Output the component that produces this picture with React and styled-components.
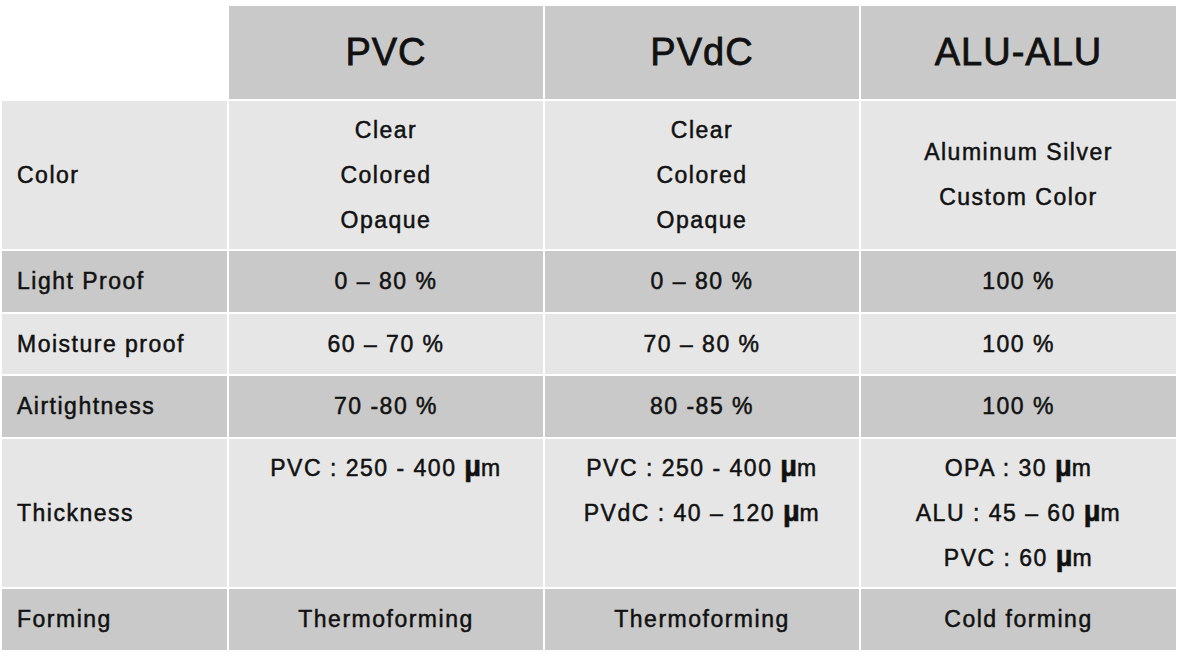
import React from "react";
import styled, { createGlobalStyle } from "styled-components";

const GlobalStyle = createGlobalStyle`
  * { box-sizing: border-box; }
  body {
    margin: 0;
    background: #fff;
    font-family: "Liberation Sans", Arial, sans-serif;
    color: #111;
  }
`;

const Table = styled.table`
  margin-top: 4px;
  width: 1178px;
  table-layout: fixed;
  border-collapse: separate;
  border-spacing: 2px;
`;

const HeadCell = styled.th`
  height: 93px;
  padding: 0;
  background: ${(p) => (p.$blank ? "transparent" : "#c9c9c9")};
  font-size: 38px;
  font-weight: 400;
  letter-spacing: 1px;
  -webkit-text-stroke: 0.8px #111;
  text-align: center;
  vertical-align: middle;
`;

const Cell = styled.td`
  height: ${(p) => p.$h}px;
  padding: ${(p) => (p.$top ? "7px 0 0" : "0")};
  background: ${(p) => (p.$dark ? "#c9c9c9" : "#e6e6e6")};
  font-size: 23px;
  line-height: 45px;
  letter-spacing: 1.5px;
  -webkit-text-stroke: 0.5px #111;
  text-align: center;
  vertical-align: ${(p) => (p.$top ? "top" : "middle")};
`;

const Label = styled(Cell)`
  text-align: left;
  padding-left: 15px;
`;

const Line = styled.div`
  height: 45px;
`;

const Micro = styled.span`
  font-weight: 700;
  font-size: 29px;
  line-height: 1;
  letter-spacing: 0;
`;

const um = (
  <>
    <Micro>µ</Micro>m
  </>
);

const rows = [
  { label: "Color", h: 148, cells: [["Clear", "Colored", "Opaque"], ["Clear", "Colored", "Opaque"], ["Aluminum Silver", "Custom Color"]] },
  { label: "Light Proof", h: 61, dark: true, cells: [["0 – 80 %"], ["0 – 80 %"], ["100 %"]] },
  { label: "Moisture proof", h: 60, cells: [["60 – 70 %"], ["70 – 80 %"], ["100 %"]] },
  { label: "Airtightness", h: 61, dark: true, cells: [["70 -80 %"], ["80 -85 %"], ["100 %"]] },
  {
    label: "Thickness",
    h: 148,
    top: [true, true, false],
    cells: [
      [<>PVC : 250 - 400 {um}</>],
      [<>PVC : 250 - 400 {um}</>, <>PVdC : 40 – 120 {um}</>],
      [<>OPA : 30 {um}</>, <>ALU : 45 – 60 {um}</>, <>PVC : 60 {um}</>],
    ],
  },
  { label: "Forming", h: 61, dark: true, cells: [["Thermoforming"], ["Thermoforming"], ["Cold forming"]] },
];

export default function App() {
  return (
    <>
      <GlobalStyle />
      <Table>
        <colgroup>
          <col style={{ width: 225 }} />
          <col style={{ width: 314 }} />
          <col style={{ width: 314 }} />
          <col style={{ width: 315 }} />
        </colgroup>
        <thead>
          <tr>
            <HeadCell $blank />
            <HeadCell>PVC</HeadCell>
            <HeadCell>PVdC</HeadCell>
            <HeadCell>ALU-ALU</HeadCell>
          </tr>
        </thead>
        <tbody>
          {rows.map((r) => (
            <tr key={r.label}>
              <Label $h={r.h} $dark={r.dark}>{r.label}</Label>
              {r.cells.map((lines, i) => (
                <Cell key={i} $h={r.h} $dark={r.dark} $top={r.top && r.top[i]}>
                  {lines.map((l, j) => (
                    <Line key={j}>{l}</Line>
                  ))}
                </Cell>
              ))}
            </tr>
          ))}
        </tbody>
      </Table>
    </>
  );
}
